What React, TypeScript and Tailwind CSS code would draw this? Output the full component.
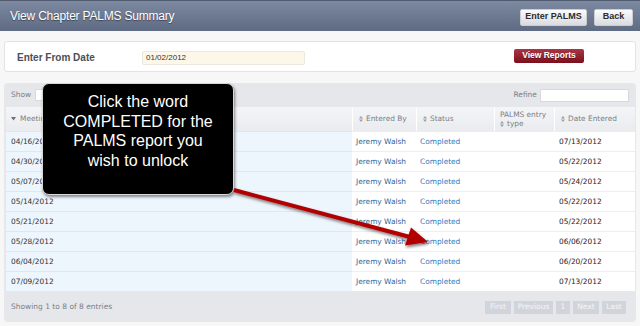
import React from 'react';

const rows = [
  { meeting: '04/16/2012', entered: '07/13/2012' },
  { meeting: '04/30/2012', entered: '05/22/2012' },
  { meeting: '05/07/2012', entered: '05/24/2012' },
  { meeting: '05/14/2012', entered: '05/22/2012' },
  { meeting: '05/21/2012', entered: '05/22/2012' },
  { meeting: '05/28/2012', entered: '06/06/2012' },
  { meeting: '06/04/2012', entered: '06/20/2012' },
  { meeting: '07/09/2012', entered: '07/13/2012' },
];

function SortBoth() {
  return (
    <svg width="4" height="6" viewBox="0 0 4 6" className="shrink-0">
      <path d="M2 0 L4 2.4 L0 2.4 Z M2 6 L4 3.6 L0 3.6 Z" fill="#9aa0a8" />
    </svg>
  );
}

function SortDesc() {
  return (
    <svg width="5" height="4" viewBox="0 0 5 4" className="shrink-0">
      <path d="M0 0 L5 0 L2.5 3.5 Z" fill="#6b7078" />
    </svg>
  );
}

function HeadButton({ label, w }: { label: string; w: string }) {
  return (
    <button
      className={`${w} h-[17px] rounded-[2px] border border-[#c9ccd2] bg-gradient-to-b from-[#fbfbfb] to-[#d9dbdf] text-[9px] font-bold text-[#2c2c2c] font-['Liberation_Sans',sans-serif] flex items-center justify-center`}
    >
      {label}
    </button>
  );
}

function PageButton({ label, w }: { label: string; w: string }) {
  return (
    <div className={`${w} h-[13px] bg-[#d2d4db] text-[#f4f5f7] text-[7.5px] flex items-center justify-center`}>
      {label}
    </div>
  );
}

export default function App() {
  return (
    <div className="relative w-[640px] h-[326px] overflow-hidden bg-[#f7f7f8] font-['DejaVu_Sans',sans-serif]">
      {/* top bar */}
      <div className="h-[31px] border-t border-[#4f5a6e] bg-gradient-to-b from-[#7d89a0] to-[#5f6b82] flex items-center justify-between pl-[10px] pr-[7px]">
        <div className="text-[12px] text-white font-['Liberation_Sans',sans-serif] [text-shadow:0_1px_1px_rgba(0,0,0,0.45)] tracking-[-0.2px]">
          View Chapter PALMS Summary
        </div>
        <div className="flex gap-[7px] pt-[2px]">
          <HeadButton label="Enter PALMS" w="w-[67px]" />
          <HeadButton label="Back" w="w-[39px]" />
        </div>
      </div>

      {/* date filter */}
      <div className="mx-[4px] mt-[10px] h-[31px] rounded-[3px] border border-[#e2e3e6] bg-white flex items-center pl-[12px] pr-[51px]">
        <div className="w-[125px] pt-[1px] text-[10px] font-bold text-[#4a4f57] font-['Liberation_Sans',sans-serif]">
          Enter From Date
        </div>
        <div className="w-[163px] h-[14px] mt-[3px] rounded-[2px] border border-[#ece8dc] bg-[#fdf7e9] text-[8px] text-[#333] pl-[3px] flex items-center font-['Liberation_Sans',sans-serif]">
          01/02/2012
        </div>
        <div className="flex-1" />
        <div className="w-[70px] h-[14px] -mt-[2px] rounded-[2px] bg-gradient-to-b from-[#ad3443] to-[#7c0e1c] text-white text-[8.5px] font-bold flex items-center justify-center font-['Liberation_Sans',sans-serif] [text-shadow:0_1px_0_rgba(0,0,0,0.4)]">
          View Reports
        </div>
      </div>

      {/* table panel */}
      <div className="mx-[4px] mt-[11px] h-[239px] rounded-[4px] bg-[#e6e7eb] pl-[2px] pr-[1px] flex flex-col">
        <div className="h-[24px] flex items-center justify-between pl-[5px] pr-[6px]">
          <div className="flex items-center gap-[4px] text-[7.5px] text-[#7a7f87]">
            Show
            <div className="w-[24px] h-[12px] bg-white border border-[#d6d8dc]" />
          </div>
          <div className="flex items-center gap-[3px] text-[7.5px] text-[#7a7f87]">
            Refine
            <div className="w-[89px] h-[13px] bg-white border border-[#d6d8dc]" />
          </div>
        </div>

        <div className="w-[629px] grid grid-cols-[346px_64px_78px_60px_81px] text-[7.4px]">
          {/* header */}
          <div className="h-[24px] bg-gradient-to-b from-[#f4f5f7] to-[#e9ebee] flex items-center gap-[4px] pl-[5px] text-[#7a7f87]">
            <SortDesc />
            Meeting Date
          </div>
          <div className="h-[24px] bg-gradient-to-b from-[#f4f5f7] to-[#e9ebee] border-l border-white flex items-center gap-[3px] pl-[6px] text-[#7a7f87]">
            <SortBoth />
            Entered By
          </div>
          <div className="h-[24px] bg-gradient-to-b from-[#f4f5f7] to-[#e9ebee] border-l border-white flex items-center gap-[3px] pl-[6px] text-[#7a7f87]">
            <SortBoth />
            Status
          </div>
          <div className="h-[24px] bg-gradient-to-b from-[#f4f5f7] to-[#e9ebee] border-l border-white flex flex-col justify-center pl-[5px] text-[#7a7f87] leading-[9px]">
            <div>PALMS entry</div>
            <div className="flex items-center gap-[3px]">
              <SortBoth />
              type
            </div>
          </div>
          <div className="h-[24px] bg-gradient-to-b from-[#f4f5f7] to-[#e9ebee] border-l border-white flex items-center gap-[3px] pl-[6px] text-[#7a7f87]">
            <SortBoth />
            Date Entered
          </div>

          {rows.map((r, i) => (
            <React.Fragment key={i}>
              <div className="h-[20px] bg-[#eef6fd] border-t border-[#e0e7ee] flex items-center pl-[5px] text-[#2f3338]">
                {r.meeting}
              </div>
              <div className="h-[20px] bg-white border-t border-[#eceef1] flex items-center pl-[4px] text-[#2f6498]">
                Jeremy Walsh
              </div>
              <div className="h-[20px] bg-white border-t border-[#eceef1] flex items-center pl-[4px] text-[#2c7abd]">
                Completed
              </div>
              <div className="h-[20px] bg-white border-t border-[#eceef1]" />
              <div className="h-[20px] bg-white border-t border-[#eceef1] flex items-center pl-[5px] text-[#1f2226]">
                {r.entered}
              </div>
            </React.Fragment>
          ))}
        </div>

        <div className="flex-1 flex items-center justify-between pl-[5px] pr-[9px] text-[7.5px]">
          <div className="text-[#7a7f87] pt-[1px]">Showing 1 to 8 of 8 entries</div>
          <div className="flex gap-[3px] pt-[1px]">
            <PageButton label="First" w="w-[26px]" />
            <PageButton label="Previous" w="w-[39px]" />
            <PageButton label="1" w="w-[14px]" />
            <PageButton label="Next" w="w-[26px]" />
            <PageButton label="Last" w="w-[24px]" />
          </div>
        </div>
      </div>

      {/* annotation callout */}
      <div className="absolute left-[42px] top-[83px] w-[192px] h-[112px] rounded-[7px] bg-black border border-[#d8d8d8] shadow-[1px_2px_3px_rgba(0,0,0,0.45)] pt-[8px] flex flex-col items-center text-white text-[16px] leading-[19.5px] font-['Liberation_Sans',sans-serif]">
        <div className="h-[19.5px]">Click the word</div>
        <div className="h-[19.5px]">COMPLETED for the</div>
        <div className="h-[19.5px]">PALMS report you</div>
        <div className="h-[19.5px]">wish to unlock</div>
      </div>

      {/* arrow */}
      <svg className="absolute left-0 top-0 pointer-events-none" width="640" height="326" viewBox="0 0 640 326">
        <defs>
          <filter id="sh" x="-10%" y="-10%" width="130%" height="140%">
            <feDropShadow dx="1" dy="2" stdDeviation="1.5" floodColor="#000" floodOpacity="0.5" />
          </filter>
        </defs>
        <g filter="url(#sh)">
          <line x1="234" y1="190" x2="410" y2="237" stroke="#b00000" strokeWidth="4" />
          <path d="M428 242 L405 245.5 L411 227.5 Z" fill="#b00000" />
        </g>
      </svg>
    </div>
  );
}
